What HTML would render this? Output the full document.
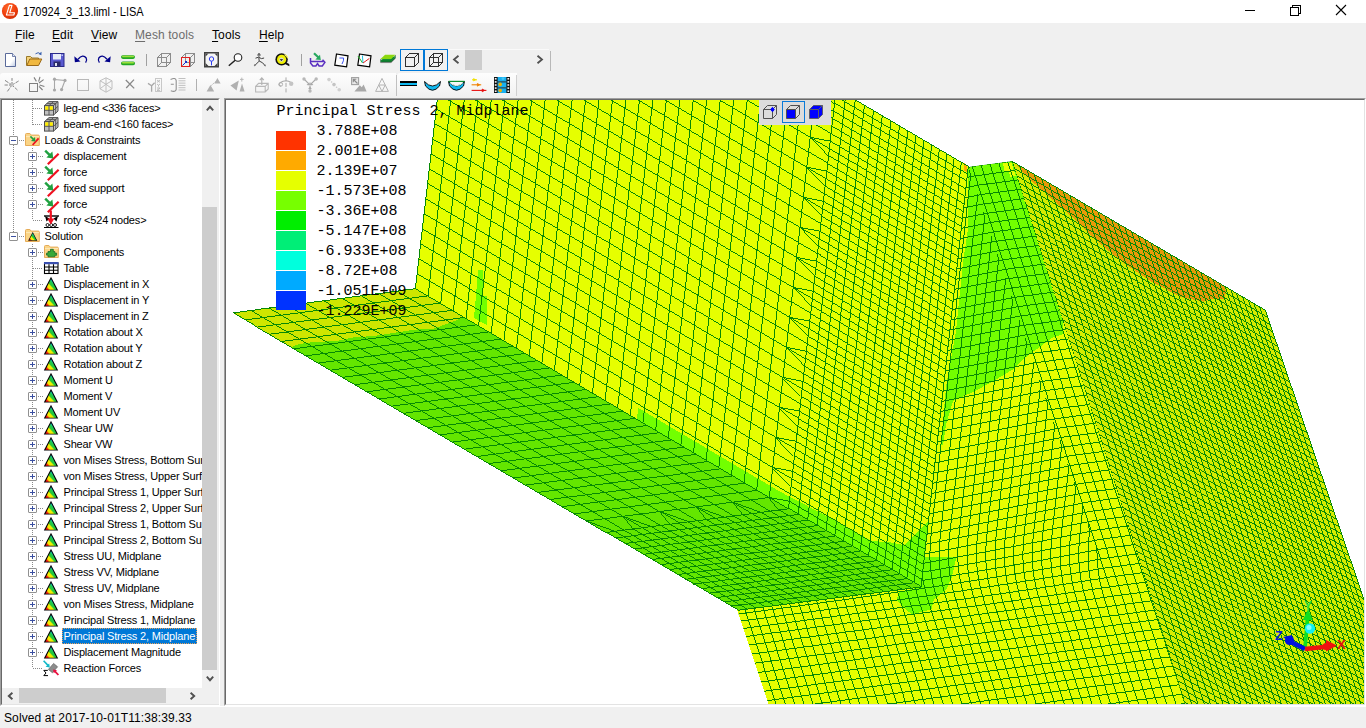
<!DOCTYPE html><html><head><meta charset="utf-8"><title>170924_3_13.liml - LISA</title><style>
*{box-sizing:border-box;margin:0;padding:0}
svg{overflow:visible}
html,body{width:1366px;height:728px;overflow:hidden;background:#f0f0f0}
body{position:relative;font-family:"Liberation Sans",sans-serif;font-size:12px;color:#000}
.abs{position:absolute}
#title{left:0;top:0;width:1366px;height:23px;background:#fff}
#title .t{left:23px;top:5px;font-size:12px;line-height:15px;white-space:nowrap;transform:scaleX(.918);transform-origin:0 0}
#menu{left:0;top:23px;width:1366px;height:23px;background:#f0f0f0}
#menu span{position:absolute;top:5px;font-size:12px;line-height:15px;white-space:nowrap;letter-spacing:.1px}
#menu u{text-decoration:underline;text-underline-offset:1.5px}
#tb2a,#tb2b{top:73px;height:24px;background:linear-gradient(#fdfdfd,#f6f6f6 60%,#f0f0f0);border-radius:3px 0 0 0}
.ic{position:absolute;width:16px;height:16px;overflow:visible}
.sep{position:absolute;width:1px;background:#a0a0a0}
#tree{left:0;top:98px;width:220px;height:608px;background:#fff;border-top:1px solid #a0a0a0;border-left:1px solid #a0a0a0;border-right:1px solid #fff;border-bottom:1px solid #fff}
#tree .in{position:absolute;left:0;top:0;right:0;bottom:0;border-top:1px solid #696969;border-left:1px solid #696969;border-right:1px solid #e3e3e3;border-bottom:1px solid #e3e3e3}
#view{left:224px;top:98px;width:1142px;height:608px;background:#fff;border-top:1px solid #a0a0a0;border-left:1px solid #a0a0a0;border-right:1px solid #fff;border-bottom:1px solid #fff}
#view .in{position:absolute;left:0;top:0;right:0;bottom:0;border-top:1px solid #696969;border-left:1px solid #696969;border-right:1px solid #e3e3e3;border-bottom:1px solid #e3e3e3}
.row{position:absolute;left:0;height:16px;font-size:11px;line-height:16px;white-space:nowrap}
.row .tx{position:absolute;top:0;height:16px;padding:0 2px 0 1.5px;letter-spacing:-.17px}
.row .sel{background:#0078d7;color:#fff;outline:1px dotted #e8a05a;outline-offset:-1px}
.pm{position:absolute;width:9px;height:9px;border:1px solid #919191;background:#fff;border-radius:1px}
.pm:before{content:"";position:absolute;left:1px;top:3px;width:5px;height:1px;background:#3a4fa0}
.pm.plus:after{content:"";position:absolute;left:3px;top:1px;width:1px;height:5px;background:#3a4fa0}
.dh{position:absolute;height:1px;background-image:linear-gradient(90deg,#8a8a8a 50%,transparent 50%);background-size:2px 1px}
.dv{position:absolute;width:1px;background-image:linear-gradient(#8a8a8a 50%,transparent 50%);background-size:1px 2px}
#vsb{left:202px;top:100px;width:17px;height:588px;background:#f0f0f0}
#vsb .th{position:absolute;left:0;top:107px;width:15px;height:463px;background:#cdcdcd}
#hsb{left:2px;top:688px;width:200px;height:16px;background:#f0f0f0}
#hsb .th{position:absolute;left:17px;top:0;width:147px;height:15px;background:#cdcdcd}
#corner{left:202px;top:688px;width:17px;height:16px;background:#f0f0f0}
#status{left:4px;top:711px;font-size:12px;line-height:15px;white-space:nowrap;letter-spacing:.1px}
#legend text{font-family:"Liberation Mono",monospace;font-size:15px;fill:#000}
</style></head><body>
<svg width="0" height="0" style="position:absolute"><defs><linearGradient id="gtri" gradientUnits="userSpaceOnUse" x1="2.500" y1="13.700" x2="12" y2="5"><stop offset="0" stop-color="#f01010"/><stop offset=".15" stop-color="#f01818"/><stop offset=".27" stop-color="#f8e800"/><stop offset=".45" stop-color="#f0f000"/><stop offset=".56" stop-color="#28c838"/><stop offset=".72" stop-color="#20c848"/><stop offset=".86" stop-color="#10c8d8"/><stop offset="1" stop-color="#2050e0"/></linearGradient></defs></svg>
<div id="title" class="abs"><svg class="abs" style="left:1px;top:2px" width="18" height="18" viewBox="0 0 18 18" ><defs><radialGradient id="gapp" cx=".4" cy=".3" r=".8"><stop offset="0" stop-color="#ff6a2a"/><stop offset=".6" stop-color="#ee3c0c"/><stop offset="1" stop-color="#c82a00"/></radialGradient></defs><circle cx="9" cy="9" r="8.100" fill="url(#gapp)"/><path d="M8.400 3.400h2.600l-2.300 7.400h4.800l-.7 2.200h-7.400z" fill="none" stroke="#fff" stroke-width="1.100" stroke-linejoin="round"/></svg><span class="abs t">170924_3_13.liml - LISA</span><svg class="abs" style="left:1240px;top:0px" width="20" height="22" viewBox="0 0 20 22" shape-rendering="crispEdges"><path d="M5 10.5H15" stroke="#000" stroke-width="1"/></svg><svg class="abs" style="left:1285px;top:0px" width="20" height="22" viewBox="0 0 20 22" shape-rendering="crispEdges"><path d="M5.5 7.5h8v8h-8zM7.5 7.5v-2h8v8h-2" fill="none" stroke="#000" stroke-width="1"/></svg><svg class="abs" style="left:1331px;top:0px" width="20" height="22" viewBox="0 0 20 22" ><path d="M5 5L15 15M15 5L5 15" stroke="#000" stroke-width="1.1"/></svg></div>
<div id="menu" class="abs"><span style="left:15px"><u>F</u>ile</span><span style="left:52px"><u>E</u>dit</span><span style="left:91px"><u>V</u>iew</span><span style="left:135px;color:#6d6d6d"><u>M</u>esh tools</span><span style="left:212px"><u>T</u>ools</span><span style="left:259px"><u>H</u>elp</span></div>
<svg class="abs" style="left:5px;top:52px" width="12" height="16" viewBox="0 0 12 16" ><defs><linearGradient id="gnew" x1="0" y1="0" x2="1" y2="1"><stop offset="0" stop-color="#fff"/><stop offset=".6" stop-color="#fff"/><stop offset="1" stop-color="#b9c6e0"/></linearGradient></defs><path d="M.5 1.5h7l3 3v10h-10z" fill="url(#gnew)" stroke="#5a6a9a" stroke-width="1"/><path d="M7.5 1.5v3h3" fill="#dfe6f5" stroke="#5a6a9a" stroke-width=".8"/></svg>
<svg class="abs" style="left:26px;top:51px" width="17" height="16" viewBox="0 0 17 16" ><path d="M.5 14.5v-9h4l1.5 1.5h6.5v2" fill="#f4d27a" stroke="#9a7a2a" stroke-width="1"/><path d="M.8 14.5l3-6.5h12l-3.3 6.5z" fill="#f0b840" stroke="#9a6a1a" stroke-width="1"/><path d="M9.5 2.8q3-2.5 5.3 .4" fill="none" stroke="#3a62b0" stroke-width="1"/><path d="M15.6 .8l-.2 3.4-3-1.2z" fill="#3a62b0"/></svg>
<svg class="abs" style="left:50px;top:53px" width="15" height="14" viewBox="0 0 15 14" ><rect x=".5" y=".5" width="13.5" height="13" fill="#5a5ad0" stroke="#2a2a8a"/><rect x="3" y="1" width="8" height="5.5" fill="#e8ecf8"/><rect x="3.5" y="8.5" width="7" height="5" fill="#2a2a6a"/><rect x="5" y="10" width="2" height="3" fill="#dfe3f0"/><rect x="11.5" y="1.5" width="1.5" height="1.5" fill="#c0c8f0"/></svg>
<svg class="abs" style="left:74px;top:54px" width="14" height="10" viewBox="0 0 14 10" ><path d="M4 5.2q5-5.6 8.2-1.2q1.2 2.2-.6 4.6" fill="none" stroke="#00008a" stroke-width="1.3"/><path d="M.3 2.2l.6 6 5.6-.8z" fill="#00008a"/></svg>
<svg class="abs" style="left:97px;top:54px" width="14" height="10" viewBox="0 0 14 10" ><path d="M10 5.2q-5-5.6-8.2-1.2q-1.2 2.2 .6 4.6" fill="none" stroke="#00008a" stroke-width="1.3"/><path d="M13.7 2.2l-.6 6-5.6-.8z" fill="#00008a"/></svg>
<svg class="abs" style="left:121px;top:55px" width="14" height="11" viewBox="0 0 14 11" ><rect x="0" y=".3" width="14" height="3.6" rx="1.8" fill="#22a822"/><rect x="1" y=".8" width="12" height="1.4" rx=".7" fill="#9be03a"/><rect x="0" y="6.6" width="14" height="3.6" rx="1.8" fill="#22a822"/><rect x="1" y="7.1" width="12" height="1.4" rx=".7" fill="#9be03a"/></svg>
<div class="sep" style="left:146px;top:54px;height:12px"></div>
<svg class="abs" style="left:157px;top:53px" width="14" height="14" viewBox="0 0 14 14" shape-rendering="crispEdges"><path d="M.5 4.5h9v9h-9zM.5 4.5l4-4h9l-4 4M13.5 .5v9l-4 4" fill="none" stroke="#8c8c8c" stroke-width="1"/><path d="M4.5 .5v9h9M4.5 9.5l-4 4" fill="none" stroke="#8c8c8c" stroke-width="1"/></svg>
<svg class="abs" style="left:181px;top:53px" width="14" height="14" viewBox="0 0 14 14" shape-rendering="crispEdges"><path d="M.5 4.5h9v9h-9zM.5 4.5l4-4h9l-4 4M13.5 .5v9l-4 4" fill="none" stroke="#8c8c8c" stroke-width="1"/><path d="M4.5 .5v9h9M4.5 9.5l-4 4" fill="none" stroke="#8c8c8c" stroke-width="1"/><rect x=".5" y="4.5" width="8" height="9" fill="none" stroke="#e02020" stroke-width="1.2"/><path d="M1.5 12.5l4-4" stroke="#1030d0" stroke-width="1"/><path d="M6.2 7.5l-2.8 .6 2.2 2.2z" fill="#1030d0"/></svg>
<svg class="abs" style="left:204px;top:52px" width="15" height="16" viewBox="0 0 15 16" ><rect x=".75" y=".75" width="13.5" height="14" fill="#f4f4f4" stroke="#404040" stroke-width="1.5"/><path d="M1.5 1.5h3l-3 3zM13.5 1.5h-3l3 3zM1.5 14h3l-3-3zM13.5 14h-3l3-3z" fill="#404040"/><circle cx="7.5" cy="7" r="2.2" fill="none" stroke="#2a3af0" stroke-width="1"/><path d="M7.5 9.2v4.2" stroke="#2a3af0" stroke-width="1"/></svg>
<svg class="abs" style="left:228px;top:53px" width="15" height="14" viewBox="0 0 15 14" ><circle cx="10" cy="4.5" r="3.8" fill="#fff" stroke="#202020" stroke-width="1.1"/><path d="M7.2 7.2L.8 12.8" stroke="#202020" stroke-width="1.5"/></svg>
<svg class="abs" style="left:253px;top:53px" width="14" height="14" viewBox="0 0 14 14" ><circle cx="6" cy="2" r="1.2" fill="none" stroke="#404040" stroke-width=".8"/><path d="M2.5 5.2l3-1 3 1.4 2.6-.6M5.8 4.5l.4 3.6-4.6 4.6M6.2 8l3.4 1.8 2.6 3M6 .2v2" fill="none" stroke="#404040" stroke-width="1"/><path d="M.8 13l2.2-.4-1.6-1.6zM12.8 13.4l-.4-2.2-1.6 1.6z" fill="#707070"/></svg>
<svg class="abs" style="left:275px;top:53px" width="15" height="14" viewBox="0 0 15 14" ><circle cx="6.6" cy="6.4" r="6.2" fill="#101010"/><circle cx="6.6" cy="6.4" r="4.6" fill="#f0f000"/><circle cx="6.4" cy="6.6" r="2.2" fill="#d8d8d8"/><path d="M4.6 6.2h3.6l-1.8 1.8z" fill="#101010"/><path d="M9 10.5l5.4 2.8-.2-2.2-3-1.6z" fill="#101010"/><path d="M9.500 1.600q2.600 1 3.200 3.600" fill="none" stroke="#f8f860" stroke-width="1.200"/></svg>
<div class="sep" style="left:301px;top:54px;height:12px"></div>
<svg class="abs" style="left:309px;top:52px" width="17" height="15" viewBox="0 0 17 15" ><path d="M1.5 6v5l2.4 3h3l1.6-2.4 1.6 2.4h3.2l2.6-3.6-2.4-2.6" fill="none" stroke="#5a2fc0" stroke-width="1.5"/><path d="M1.5 9.5h13" stroke="#5a2fc0" stroke-width="1.5"/><path d="M5 1.2l4.8 4.6" stroke="#28a860" stroke-width="2.2"/><path d="M11.8 8l-5.4-.6 4.6-4.6z" fill="#28a860"/></svg>
<svg class="abs" style="left:334px;top:53px" width="16" height="15" viewBox="0 0 16 15" ><path d="M2.5 1l11.5 1.8-1.4 11-11.8-1.6z" fill="#fff" stroke="#000" stroke-width="1.2"/><path d="M5.4 5h4.2q.4 2.6-1.6 6" fill="none" stroke="#3a50f0" stroke-width="1"/></svg>
<svg class="abs" style="left:357px;top:53px" width="16" height="15" viewBox="0 0 16 15" ><path d="M2.5 1l11.5 1.8-1.4 11-11.8-1.6z" fill="#fff" stroke="#000" stroke-width="1.2"/><path d="M1 3l4.6 7" stroke="#20b020" stroke-width="1"/><path d="M5.4 2.5l.6 7.5" stroke="#20c0e0" stroke-width="1"/><path d="M6 10l6.4-4.6" stroke="#e02020" stroke-width="1"/></svg>
<svg class="abs" style="left:380px;top:54px" width="16" height="12" viewBox="0 0 16 12" ><path d="M.5 8.4l4.6-4.2h10.4l-4.4 4.2z" fill="#606060"/><path d="M.5 7l4.6-4.2h10.4l-4.4 4.2z" fill="#1a9a3a"/><path d="M.5 5l4.6-4.2h10.4l-4.4 4.2z" fill="#8cd810"/><path d="M.5 5v3.6h10.6l4.4-4.2v-3.4" fill="none" stroke="#707070" stroke-width=".6"/><path d="M.5 6.2h10.6l4.4-4.2M.5 7.6h10.6l4.4-4.2" fill="none" stroke="#0a7a2a" stroke-width="1"/></svg>
<div class="abs" style="left:400px;top:49px;width:24px;height:22px;border:1px solid #0078d7;background:#f1f1f1"></div>
<div class="abs" style="left:424px;top:49px;width:24px;height:22px;border:1px solid #0078d7;background:#f1f1f1"></div>
<svg class="abs" style="left:405px;top:53px" width="14" height="14" viewBox="0 0 14 14" shape-rendering="crispEdges"><path d="M.5 4.5h9v9h-9zM.5 4.5l4-4h9l-4 4M13.5 .5v9l-4 4" fill="none" stroke="#303030" stroke-width="1"/></svg>
<svg class="abs" style="left:429px;top:53px" width="14" height="14" viewBox="0 0 14 14" shape-rendering="crispEdges"><path d="M.5 4.5h9v9h-9zM.5 4.5l4-4h9l-4 4M13.5 .5v9l-4 4" fill="none" stroke="#303030" stroke-width="1"/><path d="M4.5 .5v9h9M4.5 9.5l-4 4" fill="none" stroke="#303030" stroke-width="1"/></svg>
<div class="abs" style="left:448px;top:49px;width:101px;height:1px;background:#fafafa"></div>
<svg class="abs" style="left:452px;top:55px" width="8" height="9" viewBox="0 0 8 9" ><path d="M6.5 .8L2 4.5l4.5 3.7" fill="none" stroke="#505050" stroke-width="1.8"/></svg>
<div class="abs" style="left:465px;top:50px;width:17px;height:20px;background:#cdcdcd"></div>
<svg class="abs" style="left:536px;top:55px" width="8" height="9" viewBox="0 0 8 9" ><path d="M1.5 .8L6 4.5l-4.5 3.7" fill="none" stroke="#505050" stroke-width="1.8"/></svg>
<div class="sep" style="left:550px;top:51px;height:20px;background:#b8b8b8"></div>
<div id="tb2a" class="abs" style="left:0;width:396px"></div><div id="tb2b" class="abs" style="left:397px;width:120px"></div>
<svg class="abs" style="left:4px;top:77px" width="16" height="16" viewBox="0 0 16 16" ><path d="M8 8L1 3.4M8 8l6.6-4M8 8L3.4 14.4M8 8l5.4 5M8 8V1M8 8H.6" stroke="#808080" stroke-width="1" stroke-dasharray="3 1.2 2 0"/><circle cx="8" cy="8" r="1.6" fill="#c0c0c0"/></svg>
<svg class="abs" style="left:29px;top:76px" width="16" height="16" viewBox="0 0 16 16" ><rect x=".5" y="7.5" width="8" height="8" fill="none" stroke="#808080"/><path d="M10 7l4.6-3.4M9.6 5.6L11 .8M7.4 5.4L5 1.4M10.6 9l4.8 1.6M10 10.4l3.6 3.6" stroke="#808080" stroke-width="1.1"/></svg>
<svg class="abs" style="left:52px;top:77px" width="16" height="16" viewBox="0 0 16 16" ><path d="M2.5 2.5v10M2.5 2.5l10.5 1l-3.400 9" stroke="#a8a8a8" stroke-width="1.1" fill="none"/><circle cx="2.5" cy="2.2" r="1.6" fill="#a8a8a8"/><circle cx="2.5" cy="13" r="1.6" fill="#a8a8a8"/><circle cx="13" cy="3.4" r="1.6" fill="#a8a8a8"/><circle cx="9.6" cy="12.6" r="1.6" fill="#a8a8a8"/></svg>
<svg class="abs" style="left:77px;top:79px" width="12" height="12" viewBox="0 0 12 12" shape-rendering="crispEdges"><rect x=".5" y=".5" width="11" height="11" fill="none" stroke="#b8b8b8"/></svg>
<svg class="abs" style="left:99px;top:77px" width="14" height="16" viewBox="0 0 14 16" ><path d="M7 .8l6 3v8l-6 3.4-6-3.4v-8zM1 3.8l6 3.4 6-3.4M7 7.2v8M7 .8v6.4M1 11.8l6-4.6 6 4.6" fill="none" stroke="#c0c0c0" stroke-width="1"/></svg>
<svg class="abs" style="left:125px;top:79px" width="11" height="11" viewBox="0 0 11 11" ><path d="M.8 1l8.4 8.4M9 .6L1.2 9" stroke="#888" stroke-width="1.3"/></svg>
<svg class="abs" style="left:147px;top:77px" width="16" height="16" viewBox="0 0 16 16" ><path d="M1 6.4l3.6 2.4v6M4.6 8.8l3-3" stroke="#a8a8a8" stroke-width="1.3" fill="none"/><rect x="8.5" y="1.5" width="6" height="13" fill="none" stroke="#c8c8c8"/><path d="M10 3l3 2.4M13 3l-3 2.4M10 7l1.5 1.2 1.5-1.2M11.5 8.2v1.4M10 11h3l-3 2.4h3" stroke="#b0b0b0" stroke-width=".8" fill="none"/></svg>
<svg class="abs" style="left:170px;top:77px" width="16" height="16" viewBox="0 0 16 16" ><path d="M.6 2.4q5-2.4 5.6 1.2v8.8q-.6 3-5.4 1.4M.8 7.2h3" fill="none" stroke="#909090" stroke-width="1.1"/><path d="M8.5 1.5h7M8.5 3.8h7M8.5 6.1h7M8.5 8.4h7M8.5 10.700h7M8.500 13h7" stroke="#c0c0c0" stroke-width="1"/></svg>
<div class="sep" style="left:196px;top:79px;height:12px;background:#b0b0b0"></div>
<svg class="abs" style="left:206px;top:77px" width="15" height="16" viewBox="0 0 15 16" ><path d="M.6 14.6l3.8-6.6 3.8 6.600zM8.400 6.400l3-5.400 3.200 5.400z" fill="#b0b0b0"/><path d="M5.400 8.400l4.400-4" stroke="#b0b0b0" stroke-width="1" stroke-dasharray="1.500 1"/></svg>
<svg class="abs" style="left:230px;top:77px" width="16" height="16" viewBox="0 0 16 16" ><path d="M.4 8.400l8.400-5-2.200 10zM9.600 14.600l2.400-8 2.600 8z" fill="#b0b0b0"/><path d="M11.800 .6v4M10 2.400h3.600" stroke="#b8b8b8" stroke-width="1"/></svg>
<svg class="abs" style="left:255px;top:77px" width="14" height="16" viewBox="0 0 14 16" ><path d="M.6 9.400l3-3h9.600v5.600l-3 3h-9.600zM.6 9.400h9.600v5.600M10.200 9.400l3-3" fill="none" stroke="#b8b8b8" stroke-width="1.100"/><path d="M6.800 8v-6.400M4.800 3.200l2-2.400 2 2.400" fill="none" stroke="#b0b0b0" stroke-width="1.100"/></svg>
<svg class="abs" style="left:278px;top:77px" width="16" height="16" viewBox="0 0 16 16" ><path d="M8 .4v15.200" stroke="#a8a8a8" stroke-width="1" stroke-dasharray="4 1.500"/><path d="M13 5.400q-5-3.400-11 .4q-2.400 2.400 1 3.400" fill="none" stroke="#a8a8a8" stroke-width="1.100"/><circle cx="13.200" cy="6.800" r="2.200" fill="#c4c4c4"/><circle cx="2.800" cy="7.400" r="1.800" fill="none" stroke="#b0b0b0"/></svg>
<svg class="abs" style="left:302px;top:77px" width="16" height="16" viewBox="0 0 16 16" ><path d="M2 2l5.600 5.600M14 2l-5.600 5.600M8 9v5" stroke="#a8a8a8" stroke-width="1.100"/><circle cx="2" cy="2" r="1.700" fill="#b8b8b8"/><circle cx="14.200" cy="2" r="1.700" fill="#b8b8b8"/><circle cx="8" cy="14" r="1.700" fill="#b8b8b8"/><path d="M8 8.600l-3.400-.6 2.800-2.800zM8 8.600l3.400-.6-2.800-2.800zM8 9.600l-1.800 2.400h3.600z" fill="#a8a8a8"/></svg>
<svg class="abs" style="left:327px;top:77px" width="15" height="16" viewBox="0 0 15 16" ><circle cx="2" cy="2.600" r="1.800" fill="#d0d0d0"/><circle cx="7" cy="7.600" r="1.800" fill="#c4c4c4"/><circle cx="12.200" cy="12.800" r="1.800" fill="#d0d0d0"/><circle cx="4.600" cy="5" r=".8" fill="#c8c8c8"/><circle cx="9.600" cy="10.200" r=".8" fill="#c8c8c8"/></svg>
<svg class="abs" style="left:351px;top:77px" width="16" height="16" viewBox="0 0 16 16" ><rect x=".6" y=".6" width="7" height="7" fill="#e8e8e8" stroke="#a0a0a0" stroke-width="1.100"/><path d="M6.500 6.500l-4-4M2.300 5.200v-3h3" fill="none" stroke="#8c8c8c" stroke-width="1.100"/><path d="M3.400 14.400l5.400-6.200 2 2 1.800-2.800 3 7z" fill="#a8a8a8"/></svg>
<svg class="abs" style="left:375px;top:77px" width="14" height="16" viewBox="0 0 14 16" ><path d="M7 1.400l6.400 13h-12.800zM3.800 8h6.400l-3.200 6.400z" fill="none" stroke="#b4b4b4" stroke-width="1"/></svg>
<div class="sep" style="left:396px;top:75px;height:21px;background:#c0c0c0"></div><div class="sep" style="left:516px;top:75px;height:21px;background:#d0d0d0"></div>
<svg class="abs" style="left:400px;top:81px" width="17" height="6" viewBox="0 0 17 6" shape-rendering="crispEdges"><rect x="0" y=".4" width="17" height="4.600" fill="#000"/><rect x="0" y="1.600" width="17" height="2.200" fill="#10b8f0"/></svg>
<svg class="abs" style="left:424px;top:80px" width="17" height="12" viewBox="0 0 17 12" ><path d="M.5 1.500q8 9 16 0l-1 4.500q-7 8.500-14 0z" fill="#10b8f0" stroke="#000" stroke-width=".9"/></svg>
<svg class="abs" style="left:448px;top:79px" width="17" height="13" viewBox="0 0 17 13" ><path d="M.5 2.500q8 9 16 0l-1 4.500q-7 8.500-14 0z" fill="#10b8f0" stroke="#000" stroke-width=".9"/><path d="M.6 2.400h16" stroke="#109030" stroke-width="1.200"/><path d="M2 3.600q6.500 6 13 0" fill="none" stroke="#e8fff0" stroke-width="1"/></svg>
<svg class="abs" style="left:471px;top:78px" width="16" height="14" viewBox="0 0 16 14" ><path d="M1 1.800h5" stroke="#f0e000" stroke-width="1.100"/><path d="M2.600 .6l2 1.200-2 1.200z" fill="#f0e000" stroke="#f0e000" stroke-width=".8"/><path d="M.6 6.800h9.600" stroke="#f08000" stroke-width="1.100"/><path d="M6.400 5.400l2.200 1.400-2.200 1.400z" fill="#f08000" stroke="#f08000" stroke-width=".8"/><path d="M.6 12.400h14.800" stroke="#e81010" stroke-width="1.100"/><path d="M11.200 11l2.400 1.400-2.400 1.400z" fill="#e81010" stroke="#e81010" stroke-width=".8"/></svg>
<svg class="abs" style="left:494px;top:77px" width="16" height="16" viewBox="0 0 16 16" ><rect x="0" y="0" width="16" height="16" fill="#101010"/><rect x="3.600" y="0" width="8.800" height="16" fill="#18b0f0"/><rect x=".8" y="1.0" width="1.800" height="1.600" fill="#f4f4f4"/><rect x="13.400" y="1.0" width="1.800" height="1.600" fill="#f4f4f4"/><rect x=".8" y="4.1" width="1.800" height="1.600" fill="#f4f4f4"/><rect x="13.400" y="4.1" width="1.800" height="1.600" fill="#f4f4f4"/><rect x=".8" y="7.2" width="1.800" height="1.600" fill="#f4f4f4"/><rect x="13.400" y="7.2" width="1.800" height="1.600" fill="#f4f4f4"/><rect x=".8" y="10.3" width="1.800" height="1.600" fill="#f4f4f4"/><rect x="13.400" y="10.3" width="1.800" height="1.600" fill="#f4f4f4"/><rect x=".8" y="13.4" width="1.800" height="1.600" fill="#f4f4f4"/><rect x="13.400" y="13.4" width="1.800" height="1.600" fill="#f4f4f4"/><rect x="3.600" y="4.400" width="8.800" height="1" fill="#303030"/><rect x="3.600" y="10.400" width="8.800" height="1" fill="#303030"/><circle cx="6.200" cy="7.400" r="1.800" fill="#f0b000"/><circle cx="6.200" cy="13.600" r="1.800" fill="#f0b000"/><circle cx="9" cy="1.600" r="1.400" fill="#40c8f8"/></svg>
<div id="tree" class="abs"><div class="in"></div></div>
<div class="abs" style="left:2px;top:100px;width:200px;height:587px;overflow:hidden"><div style="position:absolute;left:0;top:-100px;width:200px;height:800px"><div class="dv" style="left:11px;top:100px;height:36px"></div>
<div class="dv" style="left:11px;top:145px;height:87px"></div>
<div class="dv" style="left:30px;top:100px;height:25px"></div>
<div class="dv" style="left:30px;top:148px;height:72px"></div>
<div class="dv" style="left:30px;top:244px;height:424px"></div>
<div class="row" style="top:100px;width:200px"><div class="dh" style="left:31px;top:8px;width:10px"></div><svg style="position:absolute;left:41px;top:0px;overflow:visible" width="16" height="16" viewBox="0 0 16 16"><g transform="translate(.5,.6)"><path d="M1 5l4.500-4h9l-4.500 4z" fill="#b4b4b4" stroke="#505050" stroke-width="1"/><path d="M10 5l4.500-4v9.500l-4.500 4z" fill="#c4c4c4" stroke="#505050" stroke-width="1"/><rect x="1" y="5" width="9" height="9.500" fill="#c0c0c0" stroke="#505050" stroke-width="1"/><rect x="1.700" y="5.700" width="3.400" height="3.700" fill="#ffee00"/><rect x="5.900" y="5.700" width="3.400" height="3.700" fill="#ffee00"/><path d="M5.500 5v9.500M1 9.700h9M5.500 5l4.500-4M3.200 3h9M10 9.700l4.500-4M12.200 3v9.500" fill="none" stroke="#505050" stroke-width=".9"/></g></svg><span class="tx" style="left:60px">leg-end &lt;336 faces&gt;</span></div>
<div class="row" style="top:116px;width:200px"><div class="dh" style="left:31px;top:8px;width:10px"></div><svg style="position:absolute;left:41px;top:0px;overflow:visible" width="16" height="16" viewBox="0 0 16 16"><g transform="translate(.5,.6)"><path d="M1 5l4.500-4h9l-4.500 4z" fill="#b4b4b4" stroke="#505050" stroke-width="1"/><path d="M10 5l4.500-4v9.500l-4.500 4z" fill="#c4c4c4" stroke="#505050" stroke-width="1"/><rect x="1" y="5" width="9" height="9.500" fill="#c0c0c0" stroke="#505050" stroke-width="1"/><rect x="1.700" y="5.700" width="3.400" height="3.700" fill="#ffee00"/><rect x="5.900" y="5.700" width="3.400" height="3.700" fill="#ffee00"/><path d="M5.500 5v9.500M1 9.700h9M5.500 5l4.500-4M3.200 3h9M10 9.700l4.500-4M12.200 3v9.500" fill="none" stroke="#505050" stroke-width=".9"/></g></svg><span class="tx" style="left:60px">beam-end &lt;160 faces&gt;</span></div>
<div class="row" style="top:132px;width:200px"><div class="pm minus" style="left:7px;top:4px"></div><div class="dh" style="left:17px;top:8px;width:5px"></div><svg style="position:absolute;left:22px;top:0px;overflow:visible" width="16" height="16" viewBox="0 0 16 16"><path d="M1.500 13.500v-11q0-1 1-1h3.400l1.400 1.600h7q1 0 1 1v9.400z" fill="#fad486" stroke="#e6ac58" stroke-width="1"/><path d="M2 4.600h13" stroke="#fde9b8" stroke-width="1"/><path d="M8.600 13L14.600 6.400" stroke="#f01020" stroke-width="1.800"/><path d="M6.400 4.400l3.400 3.400" stroke="#20a040" stroke-width="1.600"/><path d="M11.400 9.400l-4.400-.4 4-4z" fill="#20a040"/></svg><span class="tx" style="left:41px">Loads &amp; Constraints</span></div>
<div class="row" style="top:148px;width:200px"><div class="pm plus" style="left:26px;top:4px"></div><div class="dh" style="left:36px;top:8px;width:5px"></div><svg style="position:absolute;left:41px;top:0px;overflow:visible" width="16" height="16" viewBox="0 0 16 16"><path d="M4.800 16.200L15.600 5.800" stroke="#f01020" stroke-width="2.200"/><path d="M2.200 2.600l4.600 4.600" stroke="#20a040" stroke-width="2.400"/><path d="M10.200 10.400l-6.800-.8 6-6z" fill="#20a040"/></svg><span class="tx" style="left:60px">displacement</span></div>
<div class="row" style="top:164px;width:200px"><div class="pm plus" style="left:26px;top:4px"></div><div class="dh" style="left:36px;top:8px;width:5px"></div><svg style="position:absolute;left:41px;top:0px;overflow:visible" width="16" height="16" viewBox="0 0 16 16"><path d="M4.800 16.200L15.600 5.800" stroke="#f01020" stroke-width="2.200"/><path d="M2.200 2.600l4.600 4.600" stroke="#20a040" stroke-width="2.400"/><path d="M10.200 10.400l-6.800-.8 6-6z" fill="#20a040"/></svg><span class="tx" style="left:60px">force</span></div>
<div class="row" style="top:180px;width:200px"><div class="pm plus" style="left:26px;top:4px"></div><div class="dh" style="left:36px;top:8px;width:5px"></div><svg style="position:absolute;left:41px;top:0px;overflow:visible" width="16" height="16" viewBox="0 0 16 16"><path d="M4.800 16.200L15.600 5.800" stroke="#f01020" stroke-width="2.200"/><path d="M2.200 2.600l4.600 4.600" stroke="#20a040" stroke-width="2.400"/><path d="M10.200 10.400l-6.800-.8 6-6z" fill="#20a040"/></svg><span class="tx" style="left:60px">fixed support</span></div>
<div class="row" style="top:196px;width:200px"><div class="pm plus" style="left:26px;top:4px"></div><div class="dh" style="left:36px;top:8px;width:5px"></div><svg style="position:absolute;left:41px;top:0px;overflow:visible" width="16" height="16" viewBox="0 0 16 16"><path d="M4.800 16.200L15.600 5.800" stroke="#f01020" stroke-width="2.200"/><path d="M2.200 2.600l4.600 4.600" stroke="#20a040" stroke-width="2.400"/><path d="M10.200 10.400l-6.800-.8 6-6z" fill="#20a040"/></svg><span class="tx" style="left:60px">force</span></div>
<div class="row" style="top:212px;width:200px"><div class="dh" style="left:31px;top:8px;width:10px"></div><svg style="position:absolute;left:41px;top:0px;overflow:visible" width="16" height="16" viewBox="0 0 16 16"><path d="M1 15.500h14.500" stroke="#000" stroke-width="1"/><circle cx="4.500" cy="13" r="1.500" fill="none" stroke="#000" stroke-width=".9"/><circle cx="8.200" cy="13" r="1.500" fill="none" stroke="#000" stroke-width=".9"/><circle cx="12" cy="13" r="1.500" fill="none" stroke="#000" stroke-width=".9"/><path d="M2 4l4.500 2.500L3.500 9.500zM15 4l-4.500 2.500 3 3z" fill="#000"/><path d="M1 4h15" stroke="#000" stroke-width="1.400"/><path d="M7.800 -1.500V8" stroke="#f01020" stroke-width="2.200" fill="none"/><path d="M7.800 12.500l-3.600-6h7.200z" fill="#f01020"/></svg><span class="tx" style="left:60px">roty &lt;524 nodes&gt;</span></div>
<div class="row" style="top:228px;width:200px"><div class="pm minus" style="left:7px;top:4px"></div><div class="dh" style="left:17px;top:8px;width:5px"></div><svg style="position:absolute;left:22px;top:0px;overflow:visible" width="16" height="16" viewBox="0 0 16 16"><path d="M1.500 13.500v-11q0-1 1-1h3.400l1.400 1.600h7q1 0 1 1v9.400z" fill="#fad486" stroke="#e6ac58" stroke-width="1"/><path d="M2 4.600h13" stroke="#fde9b8" stroke-width="1"/><g transform="translate(3.600,3.400) scale(.64)"><path d="M8 .8L.8 14.6h14.4z" fill="#000"/><path d="M8 3L2.500 13.700h11z" fill="url(#gtri)"/></g></svg><span class="tx" style="left:41px">Solution</span></div>
<div class="row" style="top:244px;width:200px"><div class="pm plus" style="left:26px;top:4px"></div><div class="dh" style="left:36px;top:8px;width:5px"></div><svg style="position:absolute;left:41px;top:0px;overflow:visible" width="16" height="16" viewBox="0 0 16 16"><path d="M1.500 13.500v-11q0-1 1-1h3.400l1.400 1.600h7q1 0 1 1v9.400z" fill="#fad486" stroke="#e6ac58" stroke-width="1"/><path d="M2 4.600h13" stroke="#fde9b8" stroke-width="1"/><path d="M5 7.500h2.500v-2.200h2.800v2.200h1.500v1.600h1.800v2.200h-1.800v1.500h-6.800v-1.700h-1.500v-1.900h1.500z" fill="#38a838" stroke="#1a6a28" stroke-width=".8"/></svg><span class="tx" style="left:60px">Components</span></div>
<div class="row" style="top:260px;width:200px"><div class="dh" style="left:31px;top:8px;width:10px"></div><svg style="position:absolute;left:41px;top:0px;overflow:visible" width="16" height="16" viewBox="0 0 16 16"><rect x="1.500" y="3" width="13.500" height="10.500" fill="#fff" stroke="#000" stroke-width="1.100"/><rect x="1" y="2" width="14.500" height="2.200" fill="#3a4fb0"/><path d="M1.500 7h13.500M1.500 10.200h13.500M6 4.200v9.300M10.500 4.200v9.300" stroke="#000" stroke-width="1.100"/></svg><span class="tx" style="left:60px">Table</span></div>
<div class="row" style="top:276px;width:200px"><div class="pm plus" style="left:26px;top:4px"></div><div class="dh" style="left:36px;top:8px;width:5px"></div><svg style="position:absolute;left:41px;top:0px;overflow:visible" width="16" height="16" viewBox="0 0 16 16"><path d="M8 .8L.8 14.6h14.4z" fill="#000"/><path d="M8 3L2.500 13.700h11z" fill="url(#gtri)"/></svg><span class="tx" style="left:60px">Displacement in X</span></div>
<div class="row" style="top:292px;width:200px"><div class="pm plus" style="left:26px;top:4px"></div><div class="dh" style="left:36px;top:8px;width:5px"></div><svg style="position:absolute;left:41px;top:0px;overflow:visible" width="16" height="16" viewBox="0 0 16 16"><path d="M8 .8L.8 14.6h14.4z" fill="#000"/><path d="M8 3L2.500 13.700h11z" fill="url(#gtri)"/></svg><span class="tx" style="left:60px">Displacement in Y</span></div>
<div class="row" style="top:308px;width:200px"><div class="pm plus" style="left:26px;top:4px"></div><div class="dh" style="left:36px;top:8px;width:5px"></div><svg style="position:absolute;left:41px;top:0px;overflow:visible" width="16" height="16" viewBox="0 0 16 16"><path d="M8 .8L.8 14.6h14.4z" fill="#000"/><path d="M8 3L2.500 13.700h11z" fill="url(#gtri)"/></svg><span class="tx" style="left:60px">Displacement in Z</span></div>
<div class="row" style="top:324px;width:200px"><div class="pm plus" style="left:26px;top:4px"></div><div class="dh" style="left:36px;top:8px;width:5px"></div><svg style="position:absolute;left:41px;top:0px;overflow:visible" width="16" height="16" viewBox="0 0 16 16"><path d="M8 .8L.8 14.6h14.4z" fill="#000"/><path d="M8 3L2.500 13.700h11z" fill="url(#gtri)"/></svg><span class="tx" style="left:60px">Rotation about X</span></div>
<div class="row" style="top:340px;width:200px"><div class="pm plus" style="left:26px;top:4px"></div><div class="dh" style="left:36px;top:8px;width:5px"></div><svg style="position:absolute;left:41px;top:0px;overflow:visible" width="16" height="16" viewBox="0 0 16 16"><path d="M8 .8L.8 14.6h14.4z" fill="#000"/><path d="M8 3L2.500 13.700h11z" fill="url(#gtri)"/></svg><span class="tx" style="left:60px">Rotation about Y</span></div>
<div class="row" style="top:356px;width:200px"><div class="pm plus" style="left:26px;top:4px"></div><div class="dh" style="left:36px;top:8px;width:5px"></div><svg style="position:absolute;left:41px;top:0px;overflow:visible" width="16" height="16" viewBox="0 0 16 16"><path d="M8 .8L.8 14.6h14.4z" fill="#000"/><path d="M8 3L2.500 13.700h11z" fill="url(#gtri)"/></svg><span class="tx" style="left:60px">Rotation about Z</span></div>
<div class="row" style="top:372px;width:200px"><div class="pm plus" style="left:26px;top:4px"></div><div class="dh" style="left:36px;top:8px;width:5px"></div><svg style="position:absolute;left:41px;top:0px;overflow:visible" width="16" height="16" viewBox="0 0 16 16"><path d="M8 .8L.8 14.6h14.4z" fill="#000"/><path d="M8 3L2.500 13.700h11z" fill="url(#gtri)"/></svg><span class="tx" style="left:60px">Moment U</span></div>
<div class="row" style="top:388px;width:200px"><div class="pm plus" style="left:26px;top:4px"></div><div class="dh" style="left:36px;top:8px;width:5px"></div><svg style="position:absolute;left:41px;top:0px;overflow:visible" width="16" height="16" viewBox="0 0 16 16"><path d="M8 .8L.8 14.6h14.4z" fill="#000"/><path d="M8 3L2.500 13.700h11z" fill="url(#gtri)"/></svg><span class="tx" style="left:60px">Moment V</span></div>
<div class="row" style="top:404px;width:200px"><div class="pm plus" style="left:26px;top:4px"></div><div class="dh" style="left:36px;top:8px;width:5px"></div><svg style="position:absolute;left:41px;top:0px;overflow:visible" width="16" height="16" viewBox="0 0 16 16"><path d="M8 .8L.8 14.6h14.4z" fill="#000"/><path d="M8 3L2.500 13.700h11z" fill="url(#gtri)"/></svg><span class="tx" style="left:60px">Moment UV</span></div>
<div class="row" style="top:420px;width:200px"><div class="pm plus" style="left:26px;top:4px"></div><div class="dh" style="left:36px;top:8px;width:5px"></div><svg style="position:absolute;left:41px;top:0px;overflow:visible" width="16" height="16" viewBox="0 0 16 16"><path d="M8 .8L.8 14.6h14.4z" fill="#000"/><path d="M8 3L2.500 13.700h11z" fill="url(#gtri)"/></svg><span class="tx" style="left:60px">Shear UW</span></div>
<div class="row" style="top:436px;width:200px"><div class="pm plus" style="left:26px;top:4px"></div><div class="dh" style="left:36px;top:8px;width:5px"></div><svg style="position:absolute;left:41px;top:0px;overflow:visible" width="16" height="16" viewBox="0 0 16 16"><path d="M8 .8L.8 14.6h14.4z" fill="#000"/><path d="M8 3L2.500 13.700h11z" fill="url(#gtri)"/></svg><span class="tx" style="left:60px">Shear VW</span></div>
<div class="row" style="top:452px;width:200px"><div class="pm plus" style="left:26px;top:4px"></div><div class="dh" style="left:36px;top:8px;width:5px"></div><svg style="position:absolute;left:41px;top:0px;overflow:visible" width="16" height="16" viewBox="0 0 16 16"><path d="M8 .8L.8 14.6h14.4z" fill="#000"/><path d="M8 3L2.500 13.700h11z" fill="url(#gtri)"/></svg><span class="tx" style="left:60px">von Mises Stress, Bottom Surface</span></div>
<div class="row" style="top:468px;width:200px"><div class="pm plus" style="left:26px;top:4px"></div><div class="dh" style="left:36px;top:8px;width:5px"></div><svg style="position:absolute;left:41px;top:0px;overflow:visible" width="16" height="16" viewBox="0 0 16 16"><path d="M8 .8L.8 14.6h14.4z" fill="#000"/><path d="M8 3L2.500 13.700h11z" fill="url(#gtri)"/></svg><span class="tx" style="left:60px">von Mises Stress, Upper Surface</span></div>
<div class="row" style="top:484px;width:200px"><div class="pm plus" style="left:26px;top:4px"></div><div class="dh" style="left:36px;top:8px;width:5px"></div><svg style="position:absolute;left:41px;top:0px;overflow:visible" width="16" height="16" viewBox="0 0 16 16"><path d="M8 .8L.8 14.6h14.4z" fill="#000"/><path d="M8 3L2.500 13.700h11z" fill="url(#gtri)"/></svg><span class="tx" style="left:60px">Principal Stress 1, Upper Surface</span></div>
<div class="row" style="top:500px;width:200px"><div class="pm plus" style="left:26px;top:4px"></div><div class="dh" style="left:36px;top:8px;width:5px"></div><svg style="position:absolute;left:41px;top:0px;overflow:visible" width="16" height="16" viewBox="0 0 16 16"><path d="M8 .8L.8 14.6h14.4z" fill="#000"/><path d="M8 3L2.500 13.700h11z" fill="url(#gtri)"/></svg><span class="tx" style="left:60px">Principal Stress 2, Upper Surface</span></div>
<div class="row" style="top:516px;width:200px"><div class="pm plus" style="left:26px;top:4px"></div><div class="dh" style="left:36px;top:8px;width:5px"></div><svg style="position:absolute;left:41px;top:0px;overflow:visible" width="16" height="16" viewBox="0 0 16 16"><path d="M8 .8L.8 14.6h14.4z" fill="#000"/><path d="M8 3L2.500 13.700h11z" fill="url(#gtri)"/></svg><span class="tx" style="left:60px">Principal Stress 1, Bottom Surface</span></div>
<div class="row" style="top:532px;width:200px"><div class="pm plus" style="left:26px;top:4px"></div><div class="dh" style="left:36px;top:8px;width:5px"></div><svg style="position:absolute;left:41px;top:0px;overflow:visible" width="16" height="16" viewBox="0 0 16 16"><path d="M8 .8L.8 14.6h14.4z" fill="#000"/><path d="M8 3L2.500 13.700h11z" fill="url(#gtri)"/></svg><span class="tx" style="left:60px">Principal Stress 2, Bottom Surface</span></div>
<div class="row" style="top:548px;width:200px"><div class="pm plus" style="left:26px;top:4px"></div><div class="dh" style="left:36px;top:8px;width:5px"></div><svg style="position:absolute;left:41px;top:0px;overflow:visible" width="16" height="16" viewBox="0 0 16 16"><path d="M8 .8L.8 14.6h14.4z" fill="#000"/><path d="M8 3L2.500 13.700h11z" fill="url(#gtri)"/></svg><span class="tx" style="left:60px">Stress UU, Midplane</span></div>
<div class="row" style="top:564px;width:200px"><div class="pm plus" style="left:26px;top:4px"></div><div class="dh" style="left:36px;top:8px;width:5px"></div><svg style="position:absolute;left:41px;top:0px;overflow:visible" width="16" height="16" viewBox="0 0 16 16"><path d="M8 .8L.8 14.6h14.4z" fill="#000"/><path d="M8 3L2.500 13.700h11z" fill="url(#gtri)"/></svg><span class="tx" style="left:60px">Stress VV, Midplane</span></div>
<div class="row" style="top:580px;width:200px"><div class="pm plus" style="left:26px;top:4px"></div><div class="dh" style="left:36px;top:8px;width:5px"></div><svg style="position:absolute;left:41px;top:0px;overflow:visible" width="16" height="16" viewBox="0 0 16 16"><path d="M8 .8L.8 14.6h14.4z" fill="#000"/><path d="M8 3L2.500 13.700h11z" fill="url(#gtri)"/></svg><span class="tx" style="left:60px">Stress UV, Midplane</span></div>
<div class="row" style="top:596px;width:200px"><div class="pm plus" style="left:26px;top:4px"></div><div class="dh" style="left:36px;top:8px;width:5px"></div><svg style="position:absolute;left:41px;top:0px;overflow:visible" width="16" height="16" viewBox="0 0 16 16"><path d="M8 .8L.8 14.6h14.4z" fill="#000"/><path d="M8 3L2.500 13.700h11z" fill="url(#gtri)"/></svg><span class="tx" style="left:60px">von Mises Stress, Midplane</span></div>
<div class="row" style="top:612px;width:200px"><div class="pm plus" style="left:26px;top:4px"></div><div class="dh" style="left:36px;top:8px;width:5px"></div><svg style="position:absolute;left:41px;top:0px;overflow:visible" width="16" height="16" viewBox="0 0 16 16"><path d="M8 .8L.8 14.6h14.4z" fill="#000"/><path d="M8 3L2.500 13.700h11z" fill="url(#gtri)"/></svg><span class="tx" style="left:60px">Principal Stress 1, Midplane</span></div>
<div class="row" style="top:628px;width:200px"><div class="pm plus" style="left:26px;top:4px"></div><div class="dh" style="left:36px;top:8px;width:5px"></div><svg style="position:absolute;left:41px;top:0px;overflow:visible" width="16" height="16" viewBox="0 0 16 16"><path d="M8 .8L.8 14.6h14.4z" fill="#000"/><path d="M8 3L2.500 13.700h11z" fill="url(#gtri)"/></svg><span class="tx sel" style="left:60px">Principal Stress 2, Midplane</span></div>
<div class="row" style="top:644px;width:200px"><div class="pm plus" style="left:26px;top:4px"></div><div class="dh" style="left:36px;top:8px;width:5px"></div><svg style="position:absolute;left:41px;top:0px;overflow:visible" width="16" height="16" viewBox="0 0 16 16"><path d="M8 .8L.8 14.6h14.4z" fill="#000"/><path d="M8 3L2.500 13.700h11z" fill="url(#gtri)"/></svg><span class="tx" style="left:60px">Displacement Magnitude</span></div>
<div class="row" style="top:660px;width:200px"><div class="dh" style="left:31px;top:8px;width:10px"></div><svg style="position:absolute;left:41px;top:0px;overflow:visible" width="16" height="16" viewBox="0 0 16 16"><path d="M5.400 9.400l5.200-6 4 3.400-5.200 6z" fill="#8c8c8c" stroke="#505050" stroke-width=".6"/><path d="M.6 .8l4.400 4.600" stroke="#10b8c8" stroke-width="1.600"/><path d="M6.800 7.400l-4.200-.6 3.600-3.400z" fill="#10b8c8"/><path d="M15.400 15l-3.600-3.800" stroke="#e81040" stroke-width="1.800"/><path d="M10 9.400l4 .8-3.200 3z" fill="#e81040"/><path d="M4.800 10.400h-4l2.200 2.600-2.200 2.600h4.200" fill="none" stroke="#000" stroke-width="1"/></svg><span class="tx" style="left:60px">Reaction Forces</span></div></div></div>
<div id="vsb" class="abs"><div class="th"></div><svg class="abs" style="left:3.5px;top:5px" width="8" height="7" viewBox="0 0 8 7" ><path d="M.8 5.400L4 1.800l3.200 3.600" fill="none" stroke="#505050" stroke-width="1.900"/></svg><svg class="abs" style="left:3.5px;top:575px" width="8" height="7" viewBox="0 0 8 7" ><path d="M.8 1.600L4 5.200l3.200-3.600" fill="none" stroke="#505050" stroke-width="1.900"/></svg></div>
<div id="hsb" class="abs"><div class="th"></div><svg class="abs" style="left:5px;top:3.5px" width="7" height="8" viewBox="0 0 7 8" ><path d="M5.400 .8L1.800 4l3.600 3.200" fill="none" stroke="#505050" stroke-width="1.900"/></svg><svg class="abs" style="left:187px;top:3.5px" width="7" height="8" viewBox="0 0 7 8" ><path d="M1.600 .8L5.200 4l-3.600 3.200" fill="none" stroke="#505050" stroke-width="1.900"/></svg></div>
<div id="corner" class="abs"></div>
<div id="view" class="abs"><div class="in"></div></div>
<svg class="abs" style="left:226px;top:100px;overflow:hidden" width="1138" height="604" viewBox="226 100 1138 604" shape-rendering="crispEdges">
<polygon points="1012.0,161.2 1265.3,310.2 1459.7,880.2 1193.8,731.2" fill="#d6ec00"/>
<polygon points="1015.5,163.1 1224.0,286.0 1225.9,291.5 1224.5,299.0 1211.7,299.0 1203.6,301.7 1182.2,297.4 1166.1,289.3 1150.1,280.8 1125.9,264.7 1112.5,254.0 1093.8,237.9 1075.0,219.7 1058.9,205.2 1042.9,191.0 1026.8,176.8" fill="#e89a08"/>
<path d="M1012.0 161.2L1193.8 731.2M1019.5 165.6L1201.7 735.6M1026.9 170.0L1209.5 740.0M1034.2 174.3L1217.2 744.3M1041.6 178.6L1224.8 748.6M1048.8 182.8L1232.5 752.8M1056.0 187.1L1240.0 757.1M1063.1 191.3L1247.5 761.3M1070.2 195.5L1254.9 765.5M1077.3 199.6L1262.3 769.6M1084.2 203.7L1269.6 773.7M1091.2 207.8L1276.9 777.8M1098.0 211.8L1284.1 781.8M1104.9 215.8L1291.3 785.8M1111.6 219.8L1298.4 789.8M1118.4 223.8L1305.5 793.8M1125.0 227.7L1312.5 797.7M1131.6 231.6L1319.4 801.6M1138.2 235.4L1326.3 805.4M1144.7 239.3L1333.1 809.3M1151.2 243.1L1339.9 813.1M1157.6 246.9L1346.7 816.9M1164.0 250.6L1353.4 820.6M1170.3 254.3L1360.0 824.3M1176.6 258.0L1366.6 828.0M1182.8 261.7L1373.1 831.7M1189.0 265.3L1379.6 835.3M1195.2 268.9L1386.1 838.9M1201.3 272.5L1392.5 842.5M1207.3 276.1L1398.8 846.1M1213.3 279.6L1405.1 849.6M1219.3 283.1L1411.3 853.1M1225.2 286.6L1417.5 856.6M1231.0 290.0L1423.7 860.0M1236.8 293.5L1429.8 863.5M1242.6 296.9L1435.9 866.9M1248.4 300.2L1441.9 870.2M1254.0 303.6L1447.9 873.6M1259.7 306.9L1453.8 876.9M1265.3 310.2L1459.7 880.2M1012.0 161.2L1265.3 310.2M1014.3 168.4L1267.8 317.4M1016.6 175.6L1270.2 324.6M1018.9 182.8L1272.7 331.8M1021.2 190.1L1275.1 339.1M1023.5 197.3L1277.6 346.3M1025.8 204.5L1280.1 353.5M1028.1 211.7L1282.5 360.7M1030.4 218.9L1285.0 367.9M1032.7 226.1L1287.4 375.1M1035.0 233.4L1289.9 382.4M1037.3 240.6L1292.4 389.6M1039.6 247.8L1294.8 396.8M1041.9 255.0L1297.3 404.0M1044.2 262.2L1299.7 411.2M1046.5 269.4L1302.2 418.4M1048.8 276.6L1304.7 425.6M1051.1 283.9L1307.1 432.9M1053.4 291.1L1309.6 440.1M1055.7 298.3L1312.0 447.3M1058.0 305.5L1314.5 454.5M1060.3 312.7L1317.0 461.7M1062.6 319.9L1319.4 468.9M1064.9 327.1L1321.9 476.1M1067.2 334.4L1324.3 483.4M1069.5 341.6L1326.8 490.6M1071.8 348.8L1329.3 497.8M1074.1 356.0L1331.7 505.0M1076.4 363.2L1334.2 512.2M1078.7 370.4L1336.7 519.4M1081.0 377.7L1339.1 526.7M1083.4 384.9L1341.6 533.9M1085.7 392.1L1344.0 541.1M1088.0 399.3L1346.5 548.3M1090.3 406.5L1349.0 555.5M1092.6 413.7L1351.4 562.7M1094.9 420.9L1353.9 569.9M1097.2 428.2L1356.3 577.2M1099.5 435.4L1358.8 584.4M1101.8 442.6L1361.3 591.6M1104.1 449.8L1363.7 598.8M1106.4 457.0L1366.2 606.0M1108.7 464.2L1368.6 613.2M1111.0 471.5L1371.1 620.5M1113.3 478.7L1373.6 627.7M1115.6 485.9L1376.0 634.9M1117.9 493.1L1378.5 642.1M1120.2 500.3L1380.9 649.3M1122.5 507.5L1383.4 656.5M1124.8 514.7L1385.9 663.7M1127.1 522.0L1388.3 671.0M1129.4 529.2L1390.8 678.2M1131.7 536.4L1393.2 685.4M1134.0 543.6L1395.7 692.6M1136.3 550.8L1398.2 699.8M1138.6 558.0L1400.6 707.0M1140.9 565.3L1403.1 714.3M1143.2 572.5L1405.5 721.5M1145.5 579.7L1408.0 728.7M1147.8 586.9L1410.5 735.9M1150.1 594.1L1412.9 743.1M1152.4 601.3L1415.4 750.3M1154.7 608.5L1417.8 757.5M1157.0 615.8L1420.3 764.8M1159.3 623.0L1422.8 772.0M1161.6 630.2L1425.2 779.2M1163.9 637.4L1427.7 786.4M1166.2 644.6L1430.1 793.6M1168.5 651.8L1432.6 800.8M1170.8 659.0L1435.1 808.0M1173.1 666.3L1437.5 815.3M1175.4 673.5L1440.0 822.5M1177.7 680.7L1442.4 829.7M1180.0 687.9L1444.9 836.9M1182.3 695.1L1447.4 844.1M1184.6 702.3L1449.8 851.3M1186.9 709.6L1452.3 858.6M1189.2 716.8L1454.7 865.8M1191.5 724.0L1457.2 873.0M1193.8 731.2L1459.7 880.2" fill="none" stroke="#048804" stroke-width="0.99"/>
<polygon points="606.5,215.0 1012.0,161.2 1190.6,721.2 791.9,775.0" fill="#e6ff00"/>
<polygon points="968.4,167.0 1012.0,161.2 1063.0,322.0 1063.0,334.0 1052.0,338.0 1041.0,346.0 1026.0,357.0 1012.0,370.0 992.0,382.0 973.0,392.0 953.0,401.0 946.0,425.0 943.0,445.0 941.0,445.0 946.0,387.0 949.0,370.0 956.0,331.0 963.0,262.0 968.2,228.0" fill="#72ff00"/>
<polygon points="925.2,522.2 925.2,557.1 956.3,557.1 951.9,577.0 946.4,589.4 933.9,599.4 931.5,609.3 911.5,614.3 896.6,600.6 899.1,591.9 921.5,586.9" fill="#72ff00"/>
<polygon points="1003.0,163.5 1011.5,162.5 1013.5,170.0 1016.0,176.0 1010.5,177.0 1008.5,171.5 1004.5,172.0" fill="#e6ff00"/>
<clipPath id="cpE"><polygon points="606.5,215.0 1012.0,161.2 1190.6,721.2 791.9,775.0"/></clipPath>
<g clip-path="url(#cpE)"><path d="M1187.1 710.0L1003.9 150.0M1177.8 710.0L994.6 150.0M1168.5 710.0L985.3 150.0M1159.2 710.0L976.0 150.0M1149.9 710.0L966.7 150.0M1140.6 710.0L1107.2 608.0L1103.5 596.0L1101.9 590.0L1100.5 584.0L1099.3 578.0L1098.4 572.0L1097.8 566.0L1097.4 560.0L1097.3 554.0L1096.0 548.0M1131.3 710.0L1097.9 608.0L1094.2 596.0L1092.6 590.0L1091.2 584.0L1090.0 578.0L1089.1 572.0L1088.5 566.0L1088.1 560.0L1088.0 554.0L1088.2 548.0L1088.5 542.0L1089.7 530.0L1088.0 524.0M1122.0 710.0L1088.6 608.0L1084.9 596.0L1083.3 590.0L1081.9 584.0L1080.7 578.0L1079.8 572.0L1079.2 566.0L1078.8 560.0L1078.7 554.0L1078.9 548.0L1079.2 542.0L1080.4 530.0L1082.3 512.0L1082.0 506.0M1112.7 710.0L1079.3 608.0L1075.6 596.0L1074.0 590.0L1072.6 584.0L1071.4 578.0L1070.5 572.0L1069.9 566.0L1069.5 560.0L1069.4 554.0L1069.6 548.0L1069.9 542.0L1071.1 530.0L1075.7 488.0L1073.9 482.0M1103.4 710.0L1070.0 608.0L1066.3 596.0L1064.7 590.0L1063.3 584.0L1062.1 578.0L1061.2 572.0L1060.6 566.0L1060.2 560.0L1060.1 554.0L1060.3 548.0L1060.6 542.0L1061.8 530.0L1068.4 470.0L1067.9 464.0M1094.1 710.0L1060.7 608.0L1057.0 596.0L1055.4 590.0L1054.0 584.0L1052.8 578.0L1051.9 572.0L1051.3 566.0L1050.9 560.0L1050.8 554.0L1051.0 548.0L1051.3 542.0L1052.5 530.0L1061.7 446.0L1059.9 440.0M1084.8 710.0L1051.4 608.0L1047.7 596.0L1046.1 590.0L1044.7 584.0L1043.5 578.0L1042.6 572.0L1042.0 566.0L1041.6 560.0L1041.5 554.0L1041.7 548.0L1042.0 542.0L1043.2 530.0L1054.4 428.0L1053.8 422.0M1075.5 710.0L1042.1 608.0L1038.4 596.0L1036.8 590.0L1035.4 584.0L1034.2 578.0L1033.3 572.0L1032.7 566.0L1032.3 560.0L1032.2 554.0L1032.4 548.0L1032.7 542.0L1033.9 530.0L1047.7 404.0L1045.8 398.0M1066.2 710.0L1032.8 608.0L1029.1 596.0L1027.5 590.0L1026.1 584.0L1024.9 578.0L1024.0 572.0L1023.4 566.0L1023.0 560.0L1022.9 554.0L1023.1 548.0L1023.4 542.0L1024.6 530.0L1040.4 386.0L1039.8 380.0M1056.9 710.0L1023.5 608.0L1019.8 596.0L1018.2 590.0L1016.8 584.0L1015.6 578.0L1014.7 572.0L1014.1 566.0L1013.7 560.0L1013.6 554.0L1013.8 548.0L1014.1 542.0L1015.3 530.0L1033.1 368.0L1033.7 362.0M1047.6 710.0L1014.2 608.0L1010.5 596.0L1008.9 590.0L1007.5 584.0L1006.3 578.0L1005.4 572.0L1004.8 566.0L1004.4 560.0L1004.3 554.0L1004.5 548.0L1004.8 542.0L1006.0 530.0L1026.4 344.0L1025.7 338.0M1038.3 710.0L1004.9 608.0L1001.2 596.0L999.6 590.0L998.2 584.0L997.0 578.0L996.1 572.0L995.5 566.0L995.1 560.0L995.0 554.0L995.2 548.0L995.5 542.0L996.7 530.0L1019.1 326.0L1019.7 320.0M1029.0 710.0L995.6 608.0L991.9 596.0L990.3 590.0L988.9 584.0L987.7 578.0L986.8 572.0L986.2 566.0L985.8 560.0L985.7 554.0L985.9 548.0L986.2 542.0L987.4 530.0L1012.4 302.0L1011.6 296.0M1019.7 710.0L986.3 608.0L982.6 596.0L981.0 590.0L979.6 584.0L978.4 578.0L977.5 572.0L976.9 566.0L976.5 560.0L976.4 554.0L976.6 548.0L976.9 542.0L978.1 530.0L1005.1 284.0L1005.6 278.0M1010.4 710.0L977.0 608.0L973.3 596.0L971.7 590.0L970.3 584.0L969.1 578.0L968.2 572.0L967.6 566.0L967.2 560.0L967.1 554.0L967.3 548.0L967.6 542.0L968.8 530.0L998.5 260.0L997.5 254.0M1001.1 710.0L967.7 608.0L964.0 596.0L962.4 590.0L961.0 584.0L959.8 578.0L958.9 572.0L958.3 566.0L957.9 560.0L957.8 554.0L958.0 548.0L958.3 542.0L959.5 530.0L991.1 242.0L991.5 236.0M991.8 710.0L958.4 608.0L954.7 596.0L953.1 590.0L951.7 584.0L950.5 578.0L949.6 572.0L949.0 566.0L948.6 560.0L948.5 554.0L948.7 548.0L949.0 542.0L950.2 530.0L984.5 218.0L983.5 212.0M982.5 710.0L949.1 608.0L945.4 596.0L943.8 590.0L942.4 584.0L941.2 578.0L940.3 572.0L939.7 566.0L939.3 560.0L939.2 554.0L939.4 548.0L939.7 542.0L940.9 530.0L977.2 200.0L977.4 194.0M973.2 710.0L939.8 608.0L936.1 596.0L934.5 590.0L933.1 584.0L931.9 578.0L931.0 572.0L930.4 566.0L930.0 560.0L929.9 554.0L930.1 548.0L930.4 542.0L931.6 530.0L970.5 176.0L969.4 170.0M963.9 710.0L930.5 608.0L926.8 596.0L925.2 590.0L923.8 584.0L922.6 578.0L921.7 572.0L921.1 566.0L920.7 560.0L920.6 554.0L920.8 548.0L921.1 542.0L922.3 530.0L963.2 158.0L963.4 152.0M954.6 710.0L921.2 608.0L917.5 596.0L915.9 590.0L914.5 584.0L913.3 578.0L912.4 572.0L911.8 566.0L911.4 560.0L911.3 554.0L911.5 548.0L911.8 542.0L913.0 530.0L955.2 146.0M945.3 710.0L911.9 608.0L908.2 596.0L906.6 590.0L905.2 584.0L904.0 578.0L903.1 572.0L902.5 566.0L902.1 560.0L902.0 554.0L902.2 548.0L902.5 542.0L903.7 530.0L945.9 146.0M936.0 710.0L902.6 608.0L898.9 596.0L897.3 590.0L895.9 584.0L894.7 578.0L893.8 572.0L893.2 566.0L892.8 560.0L892.7 554.0L892.9 548.0L893.2 542.0L894.4 530.0L936.6 146.0M926.7 710.0L893.3 608.0L889.6 596.0L888.0 590.0L886.6 584.0L885.4 578.0L884.5 572.0L883.9 566.0L883.5 560.0L883.4 554.0L883.6 548.0L883.9 542.0L885.1 530.0L927.3 146.0M917.4 710.0L884.0 608.0L880.3 596.0L878.7 590.0L877.3 584.0L876.1 578.0L875.2 572.0L874.6 566.0L874.2 560.0L874.1 554.0L874.3 548.0L874.6 542.0L875.8 530.0L918.0 146.0M908.1 710.0L874.7 608.0L871.0 596.0L869.4 590.0L868.0 584.0L866.8 578.0L865.9 572.0L865.3 566.0L864.9 560.0L864.8 554.0L865.0 548.0L865.3 542.0L866.5 530.0L908.7 146.0M898.8 710.0L865.4 608.0L861.7 596.0L860.1 590.0L858.7 584.0L857.5 578.0L856.6 572.0L856.0 566.0L855.6 560.0L855.5 554.0L855.7 548.0L856.0 542.0L857.2 530.0L899.4 146.0M889.5 710.0L856.1 608.0L852.4 596.0L850.8 590.0L849.4 584.0L848.2 578.0L847.3 572.0L846.7 566.0L846.3 560.0L846.2 554.0L846.4 548.0L846.7 542.0L847.9 530.0L890.1 146.0M880.2 710.0L846.8 608.0L843.1 596.0L841.5 590.0L840.1 584.0L838.9 578.0L838.0 572.0L837.4 566.0L837.0 560.0L836.9 554.0L837.1 548.0L837.4 542.0L838.6 530.0L880.8 146.0M870.9 710.0L837.5 608.0L833.8 596.0L832.2 590.0L830.8 584.0L829.6 578.0L828.7 572.0L828.1 566.0L827.7 560.0L827.6 554.0L827.8 548.0L828.1 542.0L829.3 530.0L871.5 146.0M861.6 710.0L828.2 608.0L824.5 596.0L822.9 590.0L821.5 584.0L820.3 578.0L819.4 572.0L818.8 566.0L818.4 560.0L818.3 554.0L818.5 548.0L818.8 542.0L820.0 530.0L862.2 146.0M852.3 710.0L818.9 608.0L815.2 596.0L813.6 590.0L812.2 584.0L811.0 578.0L810.1 572.0L809.5 566.0L809.1 560.0L809.0 554.0L809.2 548.0L809.5 542.0L810.7 530.0L852.9 146.0M843.0 710.0L809.6 608.0L805.9 596.0L804.3 590.0L802.9 584.0L801.7 578.0L800.8 572.0L800.2 566.0L799.8 560.0L799.7 554.0L799.9 548.0L800.2 542.0L801.4 530.0L843.6 146.0M833.7 710.0L800.3 608.0L796.6 596.0L795.0 590.0L793.6 584.0L792.4 578.0L791.5 572.0L790.9 566.0L790.5 560.0L790.4 554.0L790.6 548.0L790.9 542.0L792.1 530.0L834.3 146.0M824.4 710.0L791.0 608.0L787.3 596.0L785.7 590.0L784.3 584.0L783.1 578.0L782.2 572.0L781.6 566.0L781.2 560.0L781.1 554.0L781.3 548.0L781.6 542.0L782.8 530.0L825.0 146.0M815.1 710.0L781.7 608.0L778.0 596.0L776.4 590.0L775.0 584.0L773.8 578.0L772.9 572.0L772.3 566.0L771.9 560.0L771.8 554.0L772.0 548.0L772.3 542.0L773.5 530.0L815.7 146.0M805.8 710.0L772.4 608.0L768.7 596.0L767.1 590.0L765.7 584.0L764.5 578.0L763.6 572.0L763.0 566.0L762.6 560.0L762.5 554.0L762.7 548.0L763.0 542.0L764.2 530.0L806.4 146.0M796.5 710.0L763.1 608.0L759.4 596.0L757.8 590.0L756.4 584.0L755.2 578.0L754.3 572.0L753.7 566.0L753.3 560.0L753.2 554.0L753.4 548.0L753.7 542.0L754.9 530.0L797.1 146.0M787.2 710.0L753.8 608.0L750.1 596.0L748.5 590.0L747.1 584.0L745.9 578.0L745.0 572.0L744.4 566.0L744.0 560.0L743.9 554.0L744.1 548.0L744.4 542.0L745.6 530.0L787.8 146.0M777.9 710.0L744.5 608.0L740.8 596.0L739.2 590.0L737.8 584.0L736.6 578.0L735.7 572.0L735.1 566.0L734.7 560.0L734.6 554.0L734.8 548.0L735.1 542.0L736.3 530.0L778.5 146.0M768.6 710.0L735.2 608.0L731.5 596.0L729.9 590.0L728.5 584.0L727.3 578.0L726.4 572.0L725.8 566.0L725.4 560.0L725.3 554.0L725.5 548.0L725.8 542.0L727.0 530.0L769.2 146.0M759.3 710.0L725.9 608.0L722.2 596.0L720.6 590.0L719.2 584.0L718.0 578.0L717.1 572.0L716.5 566.0L716.1 560.0L716.0 554.0L716.2 548.0L716.5 542.0L717.7 530.0L759.9 146.0M750.0 710.0L716.6 608.0L712.9 596.0L711.3 590.0L709.9 584.0L708.7 578.0L707.8 572.0L707.2 566.0L706.8 560.0L706.7 554.0L706.9 548.0L707.2 542.0L708.4 530.0L750.6 146.0M740.7 710.0L707.3 608.0L703.6 596.0L702.0 590.0L700.6 584.0L699.4 578.0L698.5 572.0L697.9 566.0L697.5 560.0L697.4 554.0L697.6 548.0L697.9 542.0L699.1 530.0L741.3 146.0M1012.0 161.2L972.0 166.5L700.0 220.9M1015.0 170.5L975.0 175.9L695.0 231.9M1018.0 179.9L978.0 185.2L698.0 241.2M1020.9 189.2L980.9 194.6L692.9 252.2M1023.9 198.6L983.9 203.9L695.9 261.5M1026.9 207.9L986.9 213.3L698.9 270.9M1029.9 217.3L989.9 222.6L693.9 281.8M1032.9 226.6L992.9 232.0L696.9 291.2M1035.9 236.0L995.9 241.3L699.9 300.5M1038.8 245.3L998.8 250.7L694.8 311.5M1041.8 254.7L1001.8 260.0L697.8 320.8M1044.8 264.0L1004.8 269.4L692.8 331.8M1047.8 273.4L1007.8 278.7L695.8 341.1M1050.8 282.8L1010.8 288.1L698.8 350.5M1053.8 292.1L1013.8 297.4L693.8 361.4M1056.7 301.5L1016.7 306.8L696.7 370.8M1059.7 310.8L1019.7 316.1L699.7 380.1M1062.7 320.2L1022.7 325.5L694.7 391.1M1065.7 329.5L1025.7 334.8L697.7 400.4M1068.7 338.9L1028.7 344.2L692.7 411.4M1071.7 348.2L1031.7 353.5L695.7 420.7M1074.6 357.6L1034.6 362.9L698.6 430.1M1077.6 366.9L1037.6 372.2L693.6 441.0M1080.6 376.3L1040.6 381.6L696.6 450.4M1083.6 385.6L1043.6 390.9L699.6 459.7M1086.6 395.0L1046.6 400.3L694.6 470.7M1089.5 404.3L1049.5 409.6L697.5 480.0M1092.5 413.7L1052.5 419.0L692.5 491.0M1095.5 423.0L1063.5 427.3L695.5 500.9M1098.5 432.4L1066.5 436.6L698.5 510.2M1101.5 441.7L1069.5 446.0L693.5 521.2M1104.5 451.1L1072.5 455.3L696.5 530.5M1107.4 460.4L1075.4 464.7L731.4 533.5L699.4 539.8M1110.4 469.8L1078.4 474.0L774.4 534.8L726.4 544.3L694.4 550.5M1113.4 479.1L1081.4 483.4L825.4 534.6L777.4 544.1L737.4 551.8L705.4 557.8L697.4 559.2M1116.4 488.5L1084.4 492.7L876.4 534.3L828.4 543.8L788.4 551.5L756.4 557.5L724.4 563.3L692.4 568.9M1119.4 497.8L1087.4 502.1L919.4 535.7L871.4 545.1L839.4 551.3L807.4 557.3L775.4 563.1L743.4 568.7L711.4 574.1L695.4 576.7M1122.4 507.2L1090.4 511.4L962.4 537.0L922.4 544.9L882.4 552.6L850.4 558.5L818.4 564.3L786.4 569.8L754.4 575.2L722.4 580.4L698.4 584.1M1125.3 516.5L1093.3 520.8L1005.3 538.3L965.3 546.2L933.3 552.3L901.3 558.3L869.3 564.1L837.3 569.6L805.3 575.0L773.3 580.2L741.3 585.1L701.3 591.1L693.3 592.3M1128.3 525.9L1096.3 530.1L1040.3 541.3L1000.3 549.0L968.3 555.1L936.3 561.0L904.3 566.7L872.3 572.1L840.3 577.4L808.3 582.5L776.3 587.4L736.3 593.3L696.3 598.9M1131.3 535.2L1099.3 539.5L1059.3 547.3L1027.3 553.4L995.3 559.3L963.3 565.1L931.3 570.6L899.3 575.9L867.3 581.0L835.3 586.0L795.3 591.9L755.3 597.7L707.3 604.3L699.3 605.4M1134.3 544.6L1102.3 548.8L1070.3 554.9L1038.3 560.8L1006.3 566.4L974.3 571.9L942.3 577.2L910.3 582.3L878.3 587.2L838.3 593.1L798.3 598.8L750.3 605.4L694.3 612.9M1137.3 553.9L1105.3 558.2L1073.3 563.9L1041.3 569.5L1009.3 574.9L977.3 580.0L945.3 585.0L905.3 591.0L865.3 596.7L817.3 603.4L745.3 613.1L697.3 619.5M1140.3 563.3L1108.3 567.5L1076.3 572.9L1044.3 578.2L1012.3 583.2L980.3 588.1L940.3 594.0L900.3 599.6L844.3 607.3L692.3 627.5M1143.2 572.6L1111.2 576.9L1079.2 581.9L1047.2 586.9L1007.2 592.8L967.2 598.5L919.2 605.1L695.2 634.9M1146.2 582.0L1114.2 586.2L1074.2 592.1L1034.2 597.9L986.2 604.5L698.2 642.9M1149.2 591.3L1117.2 595.6L1069.2 602.3L1005.2 610.9L693.2 652.4M1152.2 600.7L696.2 661.4M1155.2 610.0L699.2 670.6M1158.1 619.4L694.1 681.1M1161.1 628.7L697.1 690.4M1164.1 638.1L692.1 700.8M1167.1 647.4L695.1 710.2M1170.1 656.8L698.1 719.5M1173.1 666.1L765.1 720.4M1176.0 675.5L840.0 720.1M1179.0 684.8L907.0 721.0M1182.0 694.2L982.0 720.8M1185.0 703.5L1057.0 720.5M1188.0 712.9L1132.0 720.3M1191.0 722.2L1191.0 722.2M1193.9 731.6L1193.9 731.6M1196.9 740.9L1196.9 740.9M1199.9 750.3L1199.9 750.3M1202.9 759.6L1202.9 759.6M1205.9 769.0L1205.9 769.0M1208.9 778.3L1208.9 778.3M1211.8 787.7L1211.8 787.7M1214.8 797.0L1214.8 797.0M1217.8 806.4L1217.8 806.4M1220.8 815.7L1220.8 815.7M1223.8 825.1L1223.8 825.1M1226.8 834.4L1226.8 834.4M1229.7 843.8L1229.7 843.8M1232.7 853.1L1232.7 853.1M1235.7 862.5L1235.7 862.5M1238.7 871.8L1238.7 871.8M1241.7 881.2L1241.7 881.2M1244.6 890.5L1244.6 890.5M1247.6 899.9L1247.6 899.9" fill="none" stroke="#048804" stroke-width="0.99"/></g>
<polygon points="232.5,312.8 737.9,610.3 921.0,587.0 415.4,288.7" fill="#64e600"/>
<polygon points="232.5,312.8 415.4,288.7 463.9,316.8 452.7,321.8 434.1,328.5 414.1,329.7 374.3,336.0 354.4,337.2 337.0,340.9 307.1,342.7 297.2,344.7 291.7,347.2" fill="#cee600"/>
<path d="M232.5 312.8L415.4 288.7M244.7 320.0L427.6 295.9M256.9 327.2L439.8 303.1M269.1 334.3L452.0 310.3M281.3 341.5L464.2 317.5M293.5 348.7L476.4 324.7M305.7 355.9L488.6 331.9M317.9 363.1L500.8 339.1M330.1 370.2L513.0 346.3M342.3 377.4L525.2 353.5M354.5 384.6L537.4 360.7M366.7 391.8L549.6 367.9M378.9 399.0L561.8 375.1M391.1 406.2L574.1 382.3M403.3 413.3L586.3 389.5M415.5 420.5L598.5 396.7M427.7 427.7L610.7 403.9M439.9 434.9L622.9 411.1M452.1 442.1L635.1 418.3M464.3 449.2L647.3 425.5M476.5 456.4L659.5 432.7M488.7 463.6L671.7 439.9M500.9 470.8L683.9 447.1M513.1 478.0L696.1 454.3M525.3 485.1L708.3 461.5M537.5 492.3L720.5 468.7M549.7 499.5L732.7 475.9M561.9 506.7L744.9 483.1M574.1 513.9L757.1 490.3M586.3 521.0L769.3 497.5M232.5 312.8L586.3 521.0M250.8 310.4L604.6 518.7M269.1 308.0L622.9 516.3M287.4 305.6L641.2 514.0M305.7 303.2L659.5 511.6M323.9 300.8L677.8 509.3M342.2 298.3L696.1 506.9M360.5 295.9L714.4 504.6M378.8 293.5L732.7 502.2M397.1 291.1L751.0 499.9M415.4 288.7L769.3 497.5" fill="none" stroke="#048804" stroke-width="0.99"/>
<path d="M605.5 532.4L788.5 508.8M615.1 538.0L798.2 514.5M624.6 543.6L807.6 520.1M633.8 549.0L816.9 525.6M642.9 554.4L825.9 530.9M651.7 559.6L834.8 536.1M660.4 564.7L843.5 541.3M668.9 569.7L852.0 546.3M677.2 574.6L860.3 551.2M685.4 579.4L868.5 556.0M693.4 584.1L876.5 560.7M701.2 588.7L884.3 565.3M708.8 593.2L891.9 569.8M716.3 597.6L899.4 574.3M723.7 601.9L906.8 578.6M730.9 606.2L914.0 582.8M737.9 610.3L921.0 587.0M605.5 532.4L737.9 610.3M614.6 531.2L747.1 609.1M623.8 530.0L756.2 608.0M632.9 528.8L765.4 606.8M642.1 527.7L774.5 605.6M651.2 526.5L783.7 604.5M660.4 525.3L792.8 603.3M669.6 524.1L802.0 602.1M678.7 523.0L811.1 601.0M687.9 521.8L820.3 599.8M697.0 520.6L829.5 598.6M706.2 519.4L838.6 597.5M715.3 518.2L847.8 596.3M724.5 517.1L856.9 595.2M733.6 515.9L866.1 594.0M742.8 514.7L875.2 592.8M751.9 513.5L884.4 591.7M761.1 512.4L893.5 590.5M770.2 511.2L902.7 589.3M779.4 510.0L911.8 588.2M788.5 508.8L921.0 587.0" fill="none" stroke="#048804" stroke-width="0.99"/>
<path d="M586.3 521.0L605.5 532.4M586.3 521.0L614.6 531.2M604.6 518.7L623.8 530.0M622.9 516.3L632.9 528.8M622.9 516.3L642.1 527.7M622.9 516.3L651.2 526.5M641.2 514.0L660.4 525.3M659.5 511.6L669.6 524.1M659.5 511.6L678.7 523.0M659.5 511.6L687.9 521.8M677.8 509.3L697.0 520.6M696.1 506.9L706.2 519.4M696.1 506.9L715.3 518.2M696.1 506.9L724.5 517.1M714.4 504.6L733.6 515.9M732.7 502.2L742.8 514.7M732.7 502.2L751.9 513.5M732.7 502.2L761.1 512.4M751.0 499.9L770.2 511.2M769.3 497.5L779.4 510.0M769.3 497.5L788.5 508.8" fill="none" stroke="#048804" stroke-width="0.99"/>
<polygon points="464.0,-130.6 968.3,166.4 921.0,587.0 415.4,288.7" fill="#e6ff00"/>
<polygon points="636.9,419.4 638.2,407.9 780.7,492.0 821.5,513.3 872.2,541.2 888.3,542.1 904.2,545.0 928.4,520.9 921.0,587.0" fill="#72ff00"/>
<polygon points="478.0,270.0 483.0,270.0 483.0,296.0 487.0,296.0 487.0,325.0 481.0,322.0 474.0,318.0 476.0,296.0" fill="#72ff00"/>
<polygon points="964.0,163.0 967.5,165.5 966.5,172.0 963.5,170.0" fill="#ffaa00"/>
<path d="M464.0 -130.6L415.4 288.7M476.6 -123.2L428.0 296.2M489.2 -115.8L440.7 303.6M501.8 -108.3L453.3 311.1M514.4 -100.9L466.0 318.5M527.0 -93.5L478.6 326.0M539.6 -86.1L491.2 333.4M552.3 -78.6L503.9 340.9M564.9 -71.2L516.5 348.4M577.5 -63.8L529.2 355.8M590.1 -56.3L541.8 363.3M602.7 -48.9L554.4 370.7M615.3 -41.5L567.1 378.2M627.9 -34.1L579.7 385.6M640.5 -26.7L592.4 393.1M653.1 -19.2L605.0 400.6M665.7 -11.8L617.6 408.0M678.3 -4.4L630.3 415.5M690.9 3.1L642.9 422.9M703.5 10.5L655.6 430.4M716.1 17.9L668.2 437.9M728.8 25.3L680.8 445.3M741.4 32.7L693.5 452.8M754.0 40.2L706.1 460.2M766.6 47.6L718.8 467.7M779.2 55.0L731.4 475.1M791.8 62.4L744.0 482.6M804.4 69.9L756.7 490.1M817.0 77.3L769.3 497.5M464.0 -130.6L817.0 77.3M462.3 -115.6L815.3 92.3M460.5 -100.7L813.6 107.3M458.8 -85.7L811.9 122.3M457.1 -70.7L810.2 137.3M455.3 -55.7L808.5 152.3M453.6 -40.8L806.8 167.3M451.9 -25.8L805.1 182.4M450.1 -10.8L803.4 197.4M448.4 4.2L801.7 212.4M446.6 19.2L800.0 227.4M444.9 34.1L798.3 242.4M443.2 49.1L796.6 257.4M441.4 64.1L794.9 272.4M439.7 79.0L793.2 287.4M438.0 94.0L791.5 302.4M436.2 109.0L789.8 317.4M434.5 124.0L788.1 332.4M432.8 139.0L786.4 347.4M431.0 153.9L784.6 362.4M429.3 168.9L782.9 377.5M427.5 183.9L781.2 392.5M425.8 198.8L779.5 407.5M424.1 213.8L777.8 422.5M422.3 228.8L776.1 437.5M420.6 243.8L774.4 452.5M418.9 258.8L772.7 467.5M417.1 273.7L771.0 482.5M415.4 288.7L769.3 497.5" fill="none" stroke="#048804" stroke-width="0.99"/>
<path d="M836.2 88.6L788.5 508.8M845.8 94.3L798.2 514.5M855.2 99.8L807.6 520.1M864.4 105.2L816.9 525.6M873.5 110.6L825.9 530.9M882.3 115.8L834.8 536.1M891.0 120.9L843.5 541.3M899.5 125.9L852.0 546.3M907.8 130.8L860.3 551.2M915.9 135.5L868.5 556.0M923.9 140.2L876.5 560.7M931.7 144.8L884.3 565.3M939.3 149.3L891.9 569.8M946.8 153.7L899.4 574.3M954.1 158.0L906.8 578.6M961.3 162.3L914.0 582.8M968.3 166.4L921.0 587.0M836.2 88.6L968.3 166.4M835.3 96.1L967.5 173.9M834.5 103.6L966.6 181.4M833.6 111.1L965.8 188.9M832.8 118.6L964.9 196.4M831.9 126.1L964.1 204.0M831.1 133.6L963.2 211.5M830.2 141.1L962.4 219.0M829.4 148.6L961.5 226.5M828.5 156.1L960.7 234.0M827.7 163.6L959.9 241.5M826.8 171.1L959.0 249.0M826.0 178.6L958.2 256.5M825.1 186.1L957.3 264.0M824.3 193.7L956.5 271.6M823.4 201.2L955.6 279.1M822.6 208.7L954.8 286.6M821.7 216.2L953.9 294.1M820.9 223.7L953.1 301.6M820.0 231.2L952.3 309.1M819.2 238.7L951.4 316.6M818.3 246.2L950.6 324.1M817.5 253.7L949.7 331.6M816.6 261.2L948.9 339.1M815.8 268.7L948.0 346.7M814.9 276.2L947.2 354.2M814.1 283.7L946.3 361.7M813.2 291.2L945.5 369.2M812.4 298.7L944.6 376.7M811.5 306.2L943.8 384.2M810.7 313.7L943.0 391.7M809.8 321.2L942.1 399.2M809.0 328.7L941.3 406.7M808.1 336.2L940.4 414.3M807.2 343.7L939.6 421.8M806.4 351.2L938.7 429.3M805.5 358.8L937.9 436.8M804.7 366.3L937.0 444.3M803.8 373.8L936.2 451.8M803.0 381.3L935.4 459.3M802.1 388.8L934.5 466.8M801.3 396.3L933.7 474.3M800.4 403.8L932.8 481.9M799.6 411.3L932.0 489.4M798.7 418.8L931.1 496.9M797.9 426.3L930.3 504.4M797.0 433.8L929.4 511.9M796.2 441.3L928.6 519.4M795.3 448.8L927.8 526.9M794.5 456.3L926.9 534.4M793.6 463.8L926.1 541.9M792.8 471.3L925.2 549.4M791.9 478.8L924.4 557.0M791.1 486.3L923.5 564.5M790.2 493.8L922.7 572.0M789.4 501.3L921.8 579.5M788.5 508.8L921.0 587.0" fill="none" stroke="#048804" stroke-width="0.99"/>
<path d="M817.0 77.3L836.2 88.6M817.0 77.3L835.3 96.1M815.3 92.3L834.5 103.6M813.6 107.3L833.6 111.1M813.6 107.3L832.8 118.6M813.6 107.3L831.9 126.1M811.9 122.3L831.1 133.6M810.2 137.3L830.2 141.1M810.2 137.3L829.4 148.6M810.2 137.3L828.5 156.1M808.5 152.3L827.7 163.6M806.8 167.3L826.8 171.1M806.8 167.3L826.0 178.6M806.8 167.3L825.1 186.1M805.1 182.4L824.3 193.7M803.4 197.4L823.4 201.2M803.4 197.4L822.6 208.7M803.4 197.4L821.7 216.2M801.7 212.4L820.9 223.7M800.0 227.4L820.0 231.2M800.0 227.4L819.2 238.7M800.0 227.4L818.3 246.2M798.3 242.4L817.5 253.7M796.6 257.4L816.6 261.2M796.6 257.4L815.8 268.7M796.6 257.4L814.9 276.2M794.9 272.4L814.1 283.7M793.2 287.4L813.2 291.2M793.2 287.4L812.4 298.7M793.2 287.4L811.5 306.2M791.5 302.4L810.7 313.7M789.8 317.4L809.8 321.2M789.8 317.4L809.0 328.7M789.8 317.4L808.1 336.2M788.1 332.4L807.2 343.7M786.4 347.4L806.4 351.2M786.4 347.4L805.5 358.8M786.4 347.4L804.7 366.3M784.6 362.4L803.8 373.8M782.9 377.5L803.0 381.3M782.9 377.5L802.1 388.8M782.9 377.5L801.3 396.3M781.2 392.5L800.4 403.8M779.5 407.5L799.6 411.3M779.5 407.5L798.7 418.8M779.5 407.5L797.9 426.3M777.8 422.5L797.0 433.8M776.1 437.5L796.2 441.3M776.1 437.5L795.3 448.8M776.1 437.5L794.5 456.3M774.4 452.5L793.6 463.8M772.7 467.5L792.8 471.3M772.7 467.5L791.9 478.8M772.7 467.5L791.1 486.3M771.0 482.5L790.2 493.8M769.3 497.5L789.4 501.3M769.3 497.5L788.5 508.8" fill="none" stroke="#048804" stroke-width="0.99"/>
<g id="legend">
<text x="276.5" y="115">Principal Stress 2, Midplane</text>
<rect x="276" y="131" width="30" height="19" fill="#ff3300"/>
<rect x="276" y="151" width="30" height="19" fill="#ffaa00"/>
<rect x="276" y="171" width="30" height="19" fill="#e6ff00"/>
<rect x="276" y="191" width="30" height="19" fill="#77ff00"/>
<rect x="276" y="211" width="30" height="19" fill="#00ee00"/>
<rect x="276" y="231" width="30" height="19" fill="#00ee77"/>
<rect x="276" y="251" width="30" height="19" fill="#00ffdd"/>
<rect x="276" y="271" width="30" height="19" fill="#00aaff"/>
<rect x="276" y="291" width="30" height="19" fill="#0033ff"/>
<text x="316.5" y="135">3.788E+08</text>
<text x="316.5" y="155">2.001E+08</text>
<text x="316.5" y="175">2.139E+07</text>
<text x="316.5" y="195">-1.573E+08</text>
<text x="316.5" y="215">-3.36E+08</text>
<text x="316.5" y="235">-5.147E+08</text>
<text x="316.5" y="255">-6.933E+08</text>
<text x="316.5" y="275">-8.72E+08</text>
<text x="316.5" y="295">-1.051E+09</text>
<text x="316.5" y="315">-1.229E+09</text>
</g>
<g shape-rendering="auto"><path d="M1305 648L1307.500 618" stroke="#10e020" stroke-width="3.600"/><path d="M1308.200 609l-5.500 11h10z" fill="#10e020"/><text x="1304" y="610" font-family="Liberation Sans,sans-serif" font-size="12" font-weight="bold" fill="#30e040">Y</text><path d="M1305 649L1290 641.500" stroke="#0010e0" stroke-width="4.400"/><path d="M1283 637l9-2 1.500 10z" fill="#0010e0"/><circle cx="1289.500" cy="640.500" r="4.600" fill="#0010e0"/><text x="1275" y="640" font-family="Liberation Sans,sans-serif" font-size="13" font-weight="bold" fill="#1020d0">Z</text><path d="M1305 649L1328 646.500" stroke="#f01010" stroke-width="4.400"/><path d="M1337 645.500l-11-5.500v11.500z" fill="#f01010"/><circle cx="1326" cy="646.500" r="3.600" fill="#f01010"/><text x="1337" y="649" font-family="Liberation Sans,sans-serif" font-size="13" font-weight="bold" fill="#e01010">X</text><circle cx="1310" cy="628.500" r="5.200" fill="#10f0f0"/><circle cx="1309" cy="627.500" r="2.500" fill="#80ffff"/></g>
</svg>
<div class="abs" style="left:759px;top:100px;width:72px;height:25px;background:#dcdcdc"></div><div class="abs" style="left:782px;top:101px;width:23px;height:22px;border:1px solid #0a7ad8;background:#dcdcdc"></div><svg class="abs" style="left:763px;top:105px" width="14" height="14" viewBox="0 0 14 14" ><path d="M.5 4.500h9v9h-9zM.5 4.500l4-4h9l-4 4M13.500 .5v9l-4 4" fill="none" stroke="#505050" stroke-width="1"/><path d="M9.500 1.800l2.200 2.700-2.200 2.700-2.200-2.700z" fill="#0000ff"/><circle cx="9.500" cy="4.500" r="1.700" fill="#0000ff"/></svg><svg class="abs" style="left:786px;top:105px" width="14" height="14" viewBox="0 0 14 14" ><rect x=".5" y="4.500" width="9" height="9" fill="#0000ff"/><path d="M.5 4.500h9v9h-9zM.5 4.500l4-4h9l-4 4M13.500 .5v9l-4 4" fill="none" stroke="#505050" stroke-width="1"/></svg><svg class="abs" style="left:809px;top:105px" width="14" height="14" viewBox="0 0 14 14" ><path d="M.5 4.500l4-4h9v9l-4 4h-9z" fill="#0000ff"/><path d="M.5 4.500h9v9h-9zM.5 4.500l4-4h9l-4 4M13.500 .5v9l-4 4" fill="none" stroke="#5a5a6a" stroke-width="1"/></svg>
<div class="abs" style="left:0;top:706px;width:1366px;height:1px;background:#fff"></div>
<div id="status" class="abs">Solved at 2017-10-01T11:38:39.33</div>
</body></html>
